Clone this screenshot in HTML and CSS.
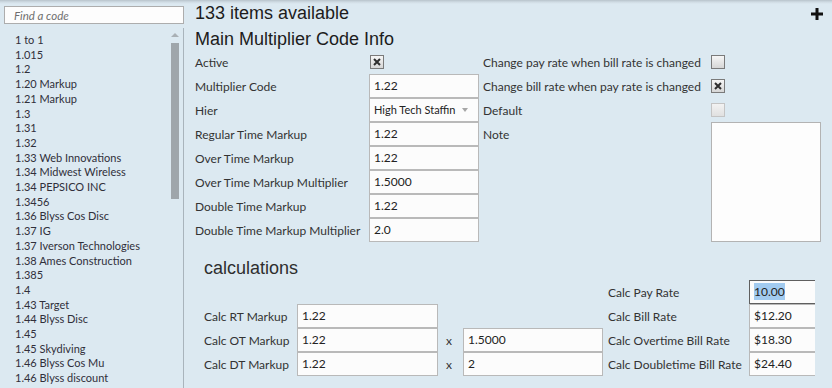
FILE: index.html
```html
<!DOCTYPE html>
<html lang="en">
<head>
<meta charset="utf-8">
<title>Multiplier Codes</title>
<link rel="stylesheet" href="styles.css">
</head>
<body>
<div class="app">
  <aside class="sidebar">
    <input class="search" type="text" placeholder="Find a code">
    <div class="listwrap">
      <ul class="codes">
        <li>1 to 1</li>
        <li>1.015</li>
        <li>1.2</li>
        <li>1.20 Markup</li>
        <li>1.21 Markup</li>
        <li>1.3</li>
        <li>1.31</li>
        <li>1.32</li>
        <li>1.33 Web Innovations</li>
        <li>1.34 Midwest Wireless</li>
        <li>1.34 PEPSICO INC</li>
        <li>1.3456</li>
        <li>1.36 Blyss Cos Disc</li>
        <li>1.37 IG</li>
        <li>1.37 Iverson Technologies</li>
        <li>1.38 Ames Construction</li>
        <li>1.385</li>
        <li>1.4</li>
        <li>1.43 Target</li>
        <li>1.44 Blyss Disc</li>
        <li>1.45</li>
        <li>1.45 Skydiving</li>
        <li>1.46 Blyss Cos Mu</li>
        <li>1.46 Blyss discount</li>
      </ul>
      <div class="scrollbar">
        <span class="sb-arrow"></span>
        <span class="sb-thumb"></span>
      </div>
    </div>
  </aside>

  <main class="main">
    <header class="topline">
      <h1 class="count">133 items available</h1>
      <svg class="plus" width="12" height="12" viewBox="0 0 12 12" aria-label="Add"><path d="M4.5 0h3v4.5H12v3H7.5V12h-3V7.5H0v-3h4.5z" fill="#111"/></svg>
    </header>
    <h2 class="title">Main Multiplier Code Info</h2>

    <div class="form">
      <div class="lbl r1">Active</div>
      <div class="cell r1 c2"><span class="cb cb-active checked"><svg viewBox="0 0 8 8"><path d="M1 1l6 6M7 1l-6 6" stroke="#2e2e2e" stroke-width="2"/></svg></span></div>
      <div class="lbl lbl-right r1 c3">Change pay rate when bill rate is changed</div>
      <div class="cell r1 c4"><span class="cb"></span></div>

      <div class="lbl r2">Multiplier Code</div>
      <div class="field r2 c2">1.22</div>
      <div class="lbl lbl-right r2 c3">Change bill rate when pay rate is changed</div>
      <div class="cell r2 c4"><span class="cb checked"><svg viewBox="0 0 8 8"><path d="M1 1l6 6M7 1l-6 6" stroke="#2e2e2e" stroke-width="2"/></svg></span></div>

      <div class="lbl r3">Hier</div>
      <div class="field select r3 c2"><span class="sel-text">High Tech Staffin</span><span class="sel-arrow"></span></div>
      <div class="lbl lbl-right r3 c3">Default</div>
      <div class="cell r3 c4"><span class="cb disabled"></span></div>

      <div class="lbl r4">Regular Time Markup</div>
      <div class="field r4 c2">1.22</div>
      <div class="lbl lbl-right r4 c3">Note</div>
      <div class="note c4"></div>

      <div class="lbl r5">Over Time Markup</div>
      <div class="field r5 c2">1.22</div>

      <div class="lbl r6">Over Time Markup Multiplier</div>
      <div class="field r6 c2">1.5000</div>

      <div class="lbl r7">Double Time Markup</div>
      <div class="field r7 c2">1.22</div>

      <div class="lbl r8">Double Time Markup Multiplier</div>
      <div class="field r8 c2">2.0</div>
    </div>

    <section class="calc">
      <h3 class="calc-title">calculations</h3>
      <div class="calc-grid">
        <div class="lbl lbl-rate k1 q5">Calc Pay Rate</div>
        <div class="field focused k1 q6"><span class="selected">10.00</span></div>

        <div class="lbl k2 q1">Calc RT Markup</div>
        <div class="field k2 q2">1.22</div>
        <div class="lbl lbl-rate k2 q5">Calc Bill Rate</div>
        <div class="field k2 q6">$12.20</div>

        <div class="lbl k3 q1">Calc OT Markup</div>
        <div class="field k3 q2">1.22</div>
        <div class="lbl times k3 q3">x</div>
        <div class="field k3 q4">1.5000</div>
        <div class="lbl lbl-rate k3 q5">Calc Overtime Bill Rate</div>
        <div class="field k3 q6">$18.30</div>

        <div class="lbl k4 q1">Calc DT Markup</div>
        <div class="field k4 q2">1.22</div>
        <div class="lbl times k4 q3">x</div>
        <div class="field k4 q4">2</div>
        <div class="lbl lbl-rate k4 q5">Calc Doubletime Bill Rate</div>
        <div class="field k4 q6">$24.40</div>
      </div>
    </section>
  </main>
</div>
</body>
</html>
```
FILE: styles.css
```css
html {
  background: #dce9f1;
}
body {
  margin: 0;
  height: 388px;
  overflow: hidden;
  font-family: Lato, "Open Sans", sans-serif;
  font-size: 12px;
  color: #383838;
  background: linear-gradient(to bottom, #b8c3cb 0, #cfdbe3 2px, #dce9f1 4px) no-repeat top left / 100% 4px, #dce9f1;
}
.app {
  display: flex;
  height: 100%;
}

/* ---------- sidebar ---------- */
.sidebar {
  width: 184px;
  flex: none;
  display: flex;
  flex-direction: column;
}
.search {
  box-sizing: border-box;
  margin: 6px 0 0 4px;
  width: 180px;
  height: 18px;
  border: 1px solid #adadad;
  background: #fdfdfd;
  padding: 0 0 0 9px;
  font-family: Lato, sans-serif;
  font-size: 11.5px;
  outline: none;
}
.search::placeholder {
  color: #6f6f6f;
  font-style: italic;
}
.listwrap {
  margin-top: 4px;
  flex: 1;
  display: flex;
  border-right: 1px solid #a9b4bc;
  overflow: hidden;
}
.codes {
  list-style: none;
  margin: 0;
  padding: 5px 0 0 15px;
  flex: 1;
  font-size: 11px;
  line-height: 14.7px;
  color: #302f3a;
  white-space: nowrap;
}
.scrollbar {
  width: 8px;
  margin-right: 4px;
  padding-top: 5px;
  display: flex;
  flex-direction: column;
  align-items: center;
}
.sb-arrow {
  width: 0;
  height: 0;
  border-left: 4px solid transparent;
  border-right: 4px solid transparent;
  border-bottom: 4px solid #a9b0b5;
}
.sb-thumb {
  margin-top: 6px;
  width: 8px;
  height: 156px;
  background: #9fa6ab;
}

/* ---------- main ---------- */
.main {
  flex: 1;
  padding-left: 11px;
  min-width: 0;
}
.topline {
  display: flex;
  justify-content: space-between;
  align-items: center;
  margin-top: 2px;
  padding-right: 9px;
  height: 22px;
}
.count {
  margin: 0;
  font-family: "Liberation Sans", Arial, sans-serif;
  font-weight: normal;
  font-size: 18px;
  line-height: 22px;
  color: #1c1c1c;
}
.plus {
  display: block;
  margin-top: 2px;
}
.title {
  margin: 4px 0 0;
  font-family: "Liberation Sans", Arial, sans-serif;
  font-weight: normal;
  font-size: 18px;
  line-height: 22px;
  color: #1c1c1c;
}

.form {
  display: grid;
  grid-template-columns: 174px 110px 232px 110px;
  grid-template-rows: repeat(8, 24px);
}
.lbl {
  display: flex;
  align-items: center;
  white-space: nowrap;
  color: #333;
  grid-column: 1;
}
.lbl-right {
  padding-left: 4px;
}
.cell {
  display: flex;
  align-items: center;
}
.r1 { grid-row: 1; }
.r2 { grid-row: 2; }
.r3 { grid-row: 3; }
.r4 { grid-row: 4; }
.r5 { grid-row: 5; }
.r6 { grid-row: 6; }
.r7 { grid-row: 7; }
.r8 { grid-row: 8; }
.c2 { grid-column: 2; }
.c3 { grid-column: 3; }
.c4 { grid-column: 4; }

.field {
  box-sizing: border-box;
  height: 24px;
  border: 1px solid #b9b9b9;
  background: #fcfcfc;
  padding: 0 4px;
  line-height: 22px;
  color: #222;
  white-space: nowrap;
  overflow: hidden;
}
.select {
  display: flex;
  align-items: center;
  padding-right: 10px;
}
.sel-text {
  white-space: nowrap;
  font-size: 11px;
}
.sel-arrow {
  margin-left: auto;
  width: 0;
  height: 0;
  border-left: 3px solid transparent;
  border-right: 3px solid transparent;
  border-top: 4px solid #a6a6a6;
}

.cb {
  box-sizing: border-box;
  width: 14px;
  height: 14px;
  border: 1px solid #7a7a7a;
  background: linear-gradient(to bottom, #f6f6f6, #d6d6d6);
  display: flex;
  align-items: center;
  justify-content: center;
}
.cb svg {
  width: 8px;
  height: 8px;
}
.cb-active {
  margin-left: 1px;
}
.cb.disabled {
  border-color: #c4c4c4;
  background: linear-gradient(to bottom, #f2f2f2, #e0e0e0);
}
.note {
  grid-row: 4 / span 5;
  box-sizing: border-box;
  border: 1px solid #b3b3b3;
  background: #fdfdfd;
}

/* ---------- calculations ---------- */
.calc {
  box-sizing: border-box;
  width: 620px;
  padding-left: 9px;
  overflow: hidden;
}
.calc-title {
  margin: 15px 0 1px;
  font-family: "Liberation Sans", Arial, sans-serif;
  font-weight: normal;
  font-size: 18px;
  line-height: 22px;
  color: #2e2e2e;
}
.calc-grid {
  display: grid;
  grid-template-columns: 93px 141px 25px 140px 146px 80px;
  grid-template-rows: repeat(4, 24px);
}
.k1 { grid-row: 1; }
.k2 { grid-row: 2; }
.k3 { grid-row: 3; }
.k4 { grid-row: 4; }
.q1 { grid-column: 1; }
.q2 { grid-column: 2; }
.q3 { grid-column: 3; }
.q4 { grid-column: 4; }
.q5 { grid-column: 5; }
.q6 { grid-column: 6; }
.lbl-rate {
  padding-left: 5px;
}
.times {
  padding-left: 8px;
}
.focused {
  border-color: #5f5f5f;
}
.selected {
  display: inline-block;
  background: #a2cbf0;
  line-height: 17px;
  vertical-align: middle;
  margin-top: -2px;
}
```
